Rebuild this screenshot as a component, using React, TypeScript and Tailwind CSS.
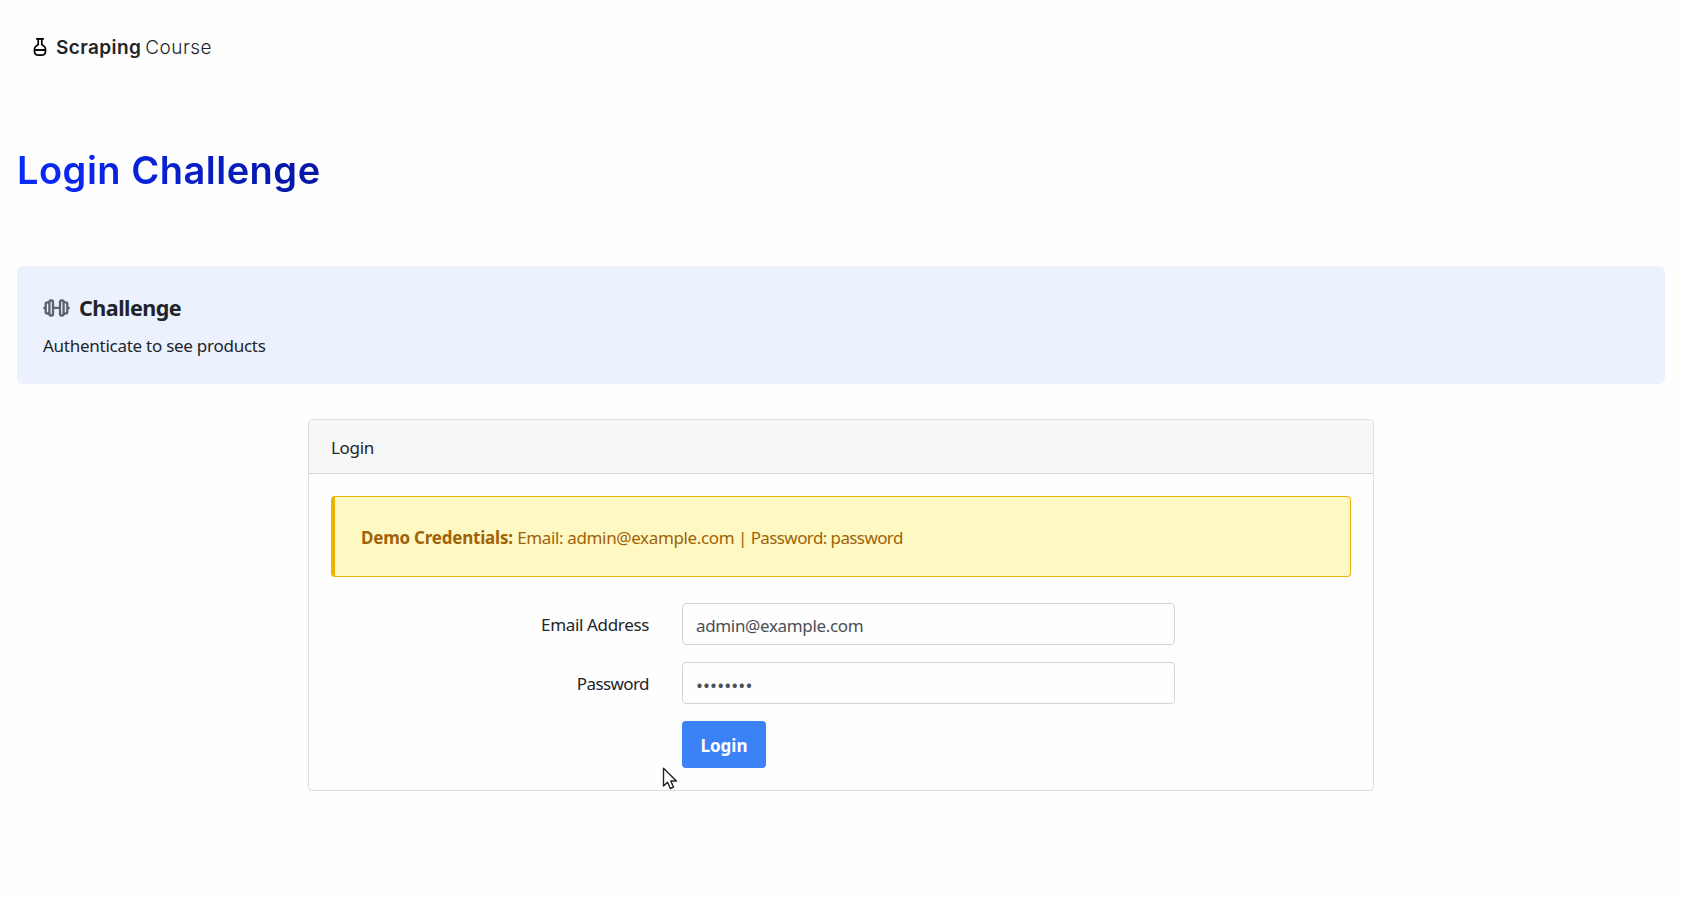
import React from 'react'
import { useState } from 'react'

const FlaskIcon = () => {
  return (
    <svg className="w-[14px] h-[20px] shrink-0" viewBox="0 0 14 20" fill="none" stroke="#000" strokeWidth="1.9">
      <path d="M3.2 1.9h7.6" />
      <path d="M5.2 2v5.8C2.8 8.8 1.4 10.7 1.4 13c0 3.4 1.4 5.1 3.4 5.1h4.4c2 0 3.4-1.7 3.4-5.1 0-2.3-1.4-4.2-3.8-5.2V2" strokeLinejoin="round" strokeWidth="1.7" />
      <path d="M1.6 13h10.8" />
    </svg>
  )
}

const DumbbellIcon = () => {
  return (
    <svg className="w-[27px] h-[18px] shrink-0" viewBox="0 0 27 18" fill="none" stroke="#5b616e" strokeWidth="2.3" strokeLinejoin="round" strokeLinecap="round">
      <rect x="6.4" y="1.3" width="3.6" height="15.2" rx="1.6" />
      <rect x="17" y="1.3" width="3.6" height="15.2" rx="1.6" />
      <path d="M6.3 3.3H4.2c-.9 0-1.5.6-1.5 1.5v8.2c0 .9.6 1.5 1.5 1.5h2.1" />
      <path d="M20.7 3.3h2.1c.9 0 1.5.6 1.5 1.5v8.2c0 .9-.6 1.5-1.5 1.5h-2.1" />
      <path d="M10.1 8.9h6.8M1.2 8.9h1M24.8 8.9h1" />
    </svg>
  )
}

const Cursor = () => {
  return (
    <svg className="absolute left-[662px] top-[767px] w-[16px] h-[23px]" viewBox="0 0 16 23">
      <path d="M1.5 1.2v17.8l4.1-3.8 2.7 6.3 3.2-1.4-2.7-6.1h5.6z" fill="#fff" stroke="#222" strokeWidth="1.4" strokeLinejoin="round" />
    </svg>
  )
}

const LoginForm = () => {

    const [email, setEmail] = useState('admin@example.com')
    const [password, setPassword] = useState('password')

  return (
    <form className="mt-[26px] space-y-[17px]" onSubmit={(e) => e.preventDefault()}>

      <div className="flex h-[42px]">
        <label htmlFor="email" className="w-[318px] mr-[33px] pt-[9px] text-right leading-[26px]">
          <span className="tracking-[-0.34px]">Email Address</span>
        </label>
        <input
          id="email"
          type="email"
          value={email}
          onChange={(e) => setEmail(e.target.value)}
          className="w-[493px] h-[42px] rounded border border-[#ced4de] bg-[#fefefe] px-[13px] pt-[3px] text-[#495057] tracking-[-0.34px] outline-none"
        />
      </div>

      <div className="flex h-[42px]">
        <label htmlFor="password" className="w-[318px] mr-[33px] pt-[9px] text-right leading-[26px]">
          <span className="tracking-[-0.58px]">Password</span>
        </label>
        <input
          id="password"
          type="password"
          value={password}
          onChange={(e) => setPassword(e.target.value)}
          className="w-[493px] h-[42px] rounded border border-[#ced4de] bg-[#fefefe] px-[13px] pt-[3px] text-[18.5px] text-[#495057] tracking-[0.1px] outline-none"
        />
      </div>

      <button type="submit" className="ml-[351px] block w-[84px] h-[47px] rounded bg-[#3b82f6] pt-[2px] font-bold text-white">
        Login
      </button>
    </form>
  )
}

const App = () => {
  return (
    <div className="relative h-[900px] overflow-hidden bg-[#fefefe] px-[17px] font-['Noto_Sans','Open_Sans',sans-serif] text-[17px] text-[#212529]">

      <header className="flex h-[94px] items-center pl-[16px] font-['Inter',sans-serif] text-[19px]">
        <FlaskIcon />
        <span className="ml-[9px] pt-[2px] font-semibold tracking-[0.4px]">Scraping</span>
        <span className="ml-[4px] pt-[2px] font-light tracking-[0.45px]">Course</span>
      </header>

      <h1 className="mt-[50px] h-[52px] w-fit bg-linear-to-r from-[#0a2bff] to-[#0616a0] bg-clip-text font-['Inter',sans-serif] text-[38px] leading-[52px] font-semibold tracking-[0.5px] text-transparent">
        Login Challenge
      </h1>

      <section className="mt-[70px] h-[118px] rounded-md bg-[#ecf1fe] px-[26px] pt-[28px]">
        <div className="flex h-[28px] items-center">
          <DumbbellIcon />
          <h2 className="ml-[9px] text-[21.5px] leading-[28px] font-bold tracking-[-0.5px]">Challenge</h2>
        </div>
        <p className="mt-[11px] leading-[26px]">
          <span className="tracking-[-0.26px]">Authenticate to see products</span>
        </p>
      </section>

      <main className="mx-auto mt-[35px] h-[372px] w-[1066px] rounded border border-[#dfdfe1]">
        <div className="h-[54px] rounded-t-[3px] border-b border-[#d8d8da] bg-[#f7f7f7] px-[22px] pt-[15px] leading-[26px]">
          <span className="tracking-[-0.3px]">Login</span>
        </div>
        <div className="px-[22px] pt-[22px]">
          <div className="h-[81px] rounded border border-l-4 border-[#eab308] bg-[#fef9c3] pt-[28px] pl-[26px] leading-[26px] text-[#a16207]">
            <strong className="font-bold tracking-[-0.22px]">Demo Credentials:</strong>{' '}
            <span className="tracking-[-0.36px]">Email: admin@example.com</span>
            <span className="tracking-[-0.6px]"> | Password: password</span>
          </div>
          <LoginForm />
        </div>
      </main>

      <Cursor />
    </div>
  )
}

export default App
